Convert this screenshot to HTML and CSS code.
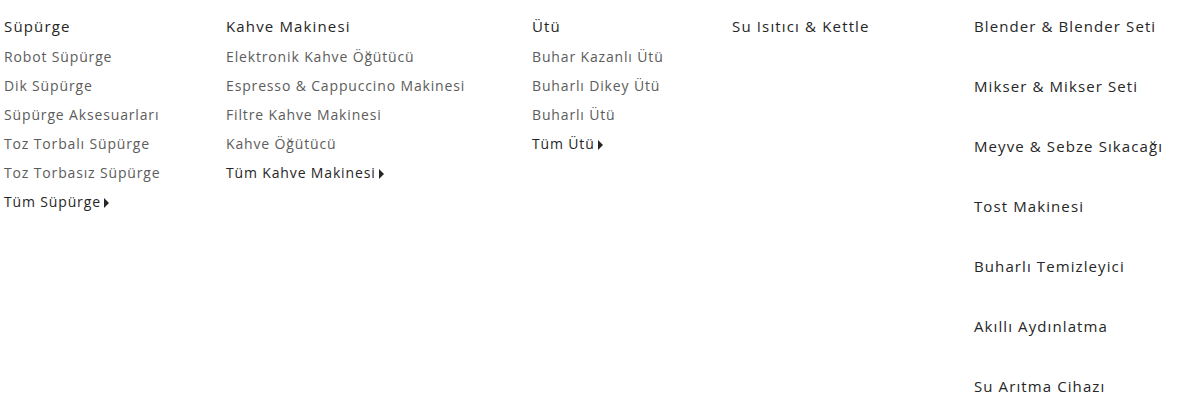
FILE: index.html
```html
<!DOCTYPE html>
<html lang="tr">
<head>
<meta charset="utf-8">
<link rel="stylesheet" href="styles.css">
</head>
<body>
<nav class="menu">
  <div class="col col-1">
    <div class="head">Süpürge</div>
    <ul class="links">
      <li>Robot Süpürge</li>
      <li>Dik Süpürge</li>
      <li>Süpürge Aksesuarları</li>
      <li>Toz Torbalı Süpürge</li>
      <li>Toz Torbasız Süpürge</li>
      <li class="all">Tüm Süpürge <span class="tri"></span></li>
    </ul>
  </div>
  <div class="col col-2">
    <div class="head">Kahve Makinesi</div>
    <ul class="links">
      <li>Elektronik Kahve Öğütücü</li>
      <li>Espresso &amp; Cappuccino Makinesi</li>
      <li>Filtre Kahve Makinesi</li>
      <li>Kahve Öğütücü</li>
      <li class="all">Tüm Kahve Makinesi <span class="tri"></span></li>
    </ul>
  </div>
  <div class="col col-3">
    <div class="head">Ütü</div>
    <ul class="links">
      <li>Buhar Kazanlı Ütü</li>
      <li>Buharlı Dikey Ütü</li>
      <li>Buharlı Ütü</li>
      <li class="all">Tüm Ütü <span class="tri"></span></li>
    </ul>
  </div>
  <div class="col col-4">
    <div class="head">Su Isıtıcı &amp; Kettle</div>
  </div>
  <div class="col col-5">
    <ul class="singles">
      <li>Blender &amp; Blender Seti</li>
      <li>Mikser &amp; Mikser Seti</li>
      <li>Meyve &amp; Sebze Sıkacağı</li>
      <li>Tost Makinesi</li>
      <li>Buharlı Temizleyici</li>
      <li>Akıllı Aydınlatma</li>
      <li>Su Arıtma Cihazı</li>
    </ul>
  </div>
</nav>
</body>
</html>
```
FILE: styles.css
```css
* { box-sizing: border-box; }
html, body { margin: 0; padding: 0; background: #fff; }
body {
  font-family: "Open Sans", "Noto Sans", sans-serif;
  color: #333;
}
.menu {
  display: grid;
  grid-template-columns: 222px 306px 200px 242px 1fr;
  padding: 16px 0 0 4px;
}
.head {
  font-size: 15px;
  line-height: 20px;
  color: #262626;
  letter-spacing: 1.15px;
}
ul { list-style: none; margin: 0; padding: 0; }
.links { padding-top: 6px; }
.links li {
  font-size: 14px;
  line-height: 29px;
  color: #5c5c5c;
  letter-spacing: 0.85px;
}
.links li.all { color: #262626; }
.tri {
  display: inline-block;
  width: 0; height: 0;
  border-top: 5px solid transparent;
  border-bottom: 5px solid transparent;
  border-left: 5px solid #262626;
  vertical-align: -1px;
  margin-left: -1px;
}
.singles li {
  font-size: 15px;
  line-height: 20px;
  height: 60px;
  color: #262626;
  letter-spacing: 1.1px;
}
.singles li:last-child { height: 20px; }
```
